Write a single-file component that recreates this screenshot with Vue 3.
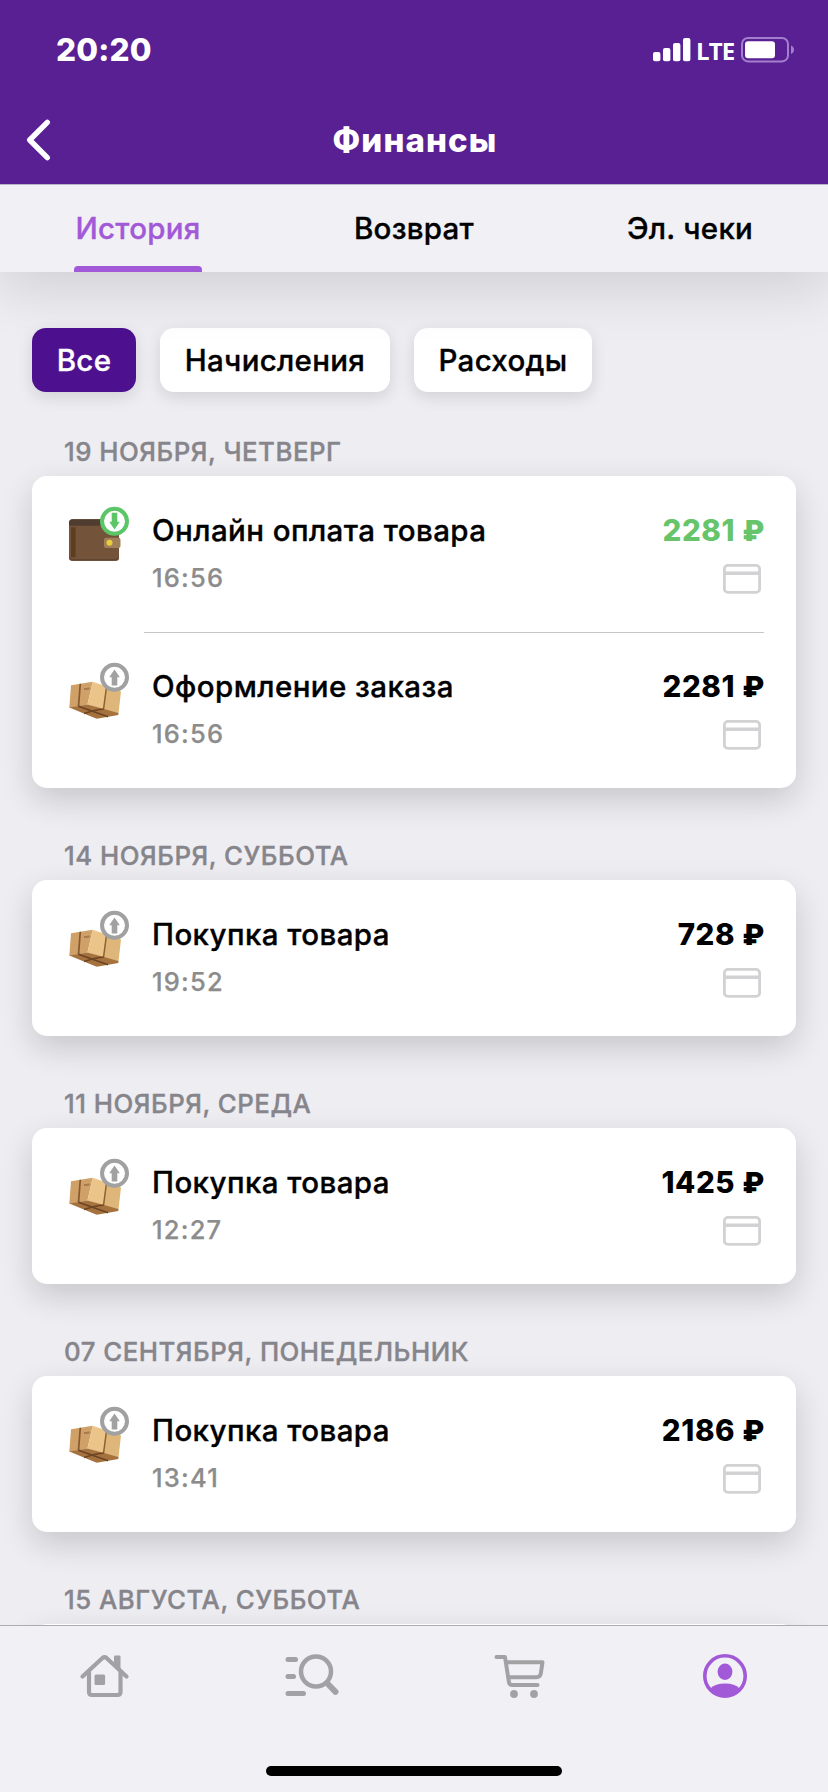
<script setup>
const tabs = [
  { label: 'История', active: true },
  { label: 'Возврат', active: false },
  { label: 'Эл. чеки', active: false },
]

const filters = [
  { label: 'Все', cls: 'w1', active: true },
  { label: 'Начисления', cls: 'w2', active: false },
  { label: 'Расходы', cls: 'w3', active: false },
]

const sections = [
  {
    date: '19 НОЯБРЯ, ЧЕТВЕРГ',
    rows: [
      { title: 'Онлайн оплата товара', time: '16:56', amount: '2281', income: true },
      { title: 'Оформление заказа', time: '16:56', amount: '2281', income: false },
    ],
  },
  { date: '14 НОЯБРЯ, СУББОТА', rows: [{ title: 'Покупка товара', time: '19:52', amount: '728', income: false }] },
  { date: '11 НОЯБРЯ, СРЕДА', rows: [{ title: 'Покупка товара', time: '12:27', amount: '1425', income: false }] },
  { date: '07 СЕНТЯБРЯ, ПОНЕДЕЛЬНИК', rows: [{ title: 'Покупка товара', time: '13:41', amount: '2186', income: false }] },
  { date: '15 АВГУСТА, СУББОТА', rows: [{ title: '', time: '', amount: '', income: false, blank: true }] },
]
</script>

<template>
  <div class="screen">
    <header class="header">
      <div class="status">
        <span class="clock">20:20</span>
        <div class="indicators">
          <svg class="signal" width="38" height="24" viewBox="0 0 38 24" fill="#fff">
            <rect x="0" y="14" width="7.4" height="9.3" rx="2" />
            <rect x="10" y="10" width="7.4" height="13.3" rx="2" />
            <rect x="20" y="5" width="7.4" height="18.3" rx="2" />
            <rect x="30" y="0" width="7.4" height="23.3" rx="2" />
          </svg>
          <span class="lte">LTE</span>
          <svg class="battery" width="54" height="26" viewBox="0 0 54 26">
            <rect x="1" y="1" width="46" height="23.4" rx="6" fill="none" stroke="#a47fcb" stroke-width="2" />
            <rect x="4" y="4.2" width="30" height="17" rx="3.2" fill="#fff" />
            <path d="M50 8.6c2 .8 3 2.300 3 4.200s-1 3.400-3 4.200z" fill="#a47fcb" />
          </svg>
        </div>
      </div>
      <div class="navbar">
        <svg class="back" width="28" height="44" viewBox="0 0 28 44" fill="none" stroke="#fff" stroke-width="5.400" stroke-linecap="round" stroke-linejoin="round">
          <path d="M23.300 4.300 5.700 22l17.600 17.600" />
        </svg>
        <h1 class="title">Финансы</h1>
      </div>
    </header>

    <nav class="tabs">
      <div v-for="tab in tabs" :key="tab.label" class="tab" :class="{ active: tab.active }">
        <span>{{ tab.label }}</span>
      </div>
    </nav>

    <main class="content">
      <div class="filters">
        <button v-for="f in filters" :key="f.label" class="chip" :class="[f.cls, { active: f.active }]">{{ f.label }}</button>
      </div>

      <section v-for="s in sections" :key="s.date" class="section">
        <h2 class="date">{{ s.date }}</h2>
        <div class="card">
          <article v-for="(r, i) in s.rows" :key="i" class="row">
            <template v-if="!r.blank">
              <svg class="kind" width="66" height="60" viewBox="0 0 66 60">
                <g v-if="r.income" transform="translate(0 .8)">
                  <rect x="5" y="14.500" width="50" height="41.500" rx="3.500" fill="#735339" />
                  <path d="M5 21v-3q0-3.500 3.500-3.500h30V21z" fill="#513d30" />
                  <path d="M7 22.500h4.500v30H7z" fill="#5d3d20" />
                  <path d="M5 52v.5q0 3.500 3.500 3.500h43q3.500 0 3.500-3.500V52q-1 2.300-3.500 2.300h-43Q6 54.300 5 52z" fill="#604630" />
                  <rect x="40" y="33" width="16.500" height="10.300" rx="2" fill="#a08058" />
                  <circle cx="45.500" cy="38" r="3" fill="#e8cf3a" />
                </g>
                <g v-else>
                  <path d="M7 25.200 28.700 21.800 23.500 44.500 5.300 48z" fill="#cfa067" />
                  <path d="M28.700 21.800 42.500 26.500 39.500 49.500 23.500 44.500z" fill="#ebc48a" />
                  <path d="M42.500 26.500 57 31.500 54.500 53.200 39.500 49.500z" fill="#dfb679" />
                  <path d="M5.300 47.500 23.500 44.500 54.500 53 54.300 55 32.700 58.800z" fill="#a5713d" />
                  <path d="M16.300 23.800 14.500 46.300" fill="none" stroke="#86582f" stroke-width="1.700" />
                  <path d="M42.500 27 39.500 49.300" fill="none" stroke="#8d6136" stroke-width="1.500" />
                  <path d="M14.500 46.300 44 56.800M39.500 49.300Q32 49.500 20 53.500" fill="none" stroke="#6b4424" stroke-width="1.500" />
                  <path d="m20 28.300 5.500-.8v2l-5.500.6z" fill="#a37a48" />
                </g>
                <circle cx="50.500" cy="17.300" r="12.500" fill="#fff" :stroke="r.income ? '#5bc567' : '#a1a1a1'" stroke-width="4" />
                <path v-if="r.income" d="M47.700 8.800h5.600v9h2.500l-5.300 7.700-5.300-7.700h2.500z" fill="#5bc567" />
                <path v-else d="M47.700 25.600h5.600v-8.400h2.500l-5.300-7.700-5.300 7.700h2.500z" fill="#a1a1a1" />
              </svg>
              <div class="info">
                <div class="name">{{ r.title }}</div>
                <div class="time">{{ r.time }}</div>
              </div>
              <div class="side">
                <div class="amount" :class="{ income: r.income }">{{ r.amount }} <span class="currency">₽</span></div>
                <svg class="pay" width="38" height="30" viewBox="0 0 38 30" fill="none" stroke="#d2d2d4" stroke-width="2.800">
                  <rect x="1.400" y="1.400" width="35.200" height="27" rx="3.500" />
                  <path d="M2 9.200h34.500" stroke-width="3.400" />
                </svg>
              </div>
            </template>
          </article>
        </div>
      </section>
    </main>

    <footer class="bottom">
      <div class="items">
        <div class="item">
          <svg width="52" height="48" viewBox="0 0 52 48" fill="none" stroke="#a2a2a4" stroke-width="4.200" stroke-linecap="round" stroke-linejoin="round">
            <path d="M4.500 24.500 24.500 6q2-1.600 4 0l20 18.500" />
            <path d="M11 20v20q0 3 3 3h25.500q3 0 3-3V20" />
            <path d="M37 4.500h4.500v14L37 14z" fill="#a2a2a4" stroke-width="2" />
            <rect x="16.500" y="22.500" width="10.600" height="10.600" rx="1.500" fill="#a2a2a4" stroke="none" />
          </svg>
        </div>
        <div class="item">
          <svg width="56" height="48" viewBox="0 0 56 48" fill="none" stroke="#a2a2a4" stroke-width="4.500" stroke-linecap="round">
            <path d="M5 7.500h7.500M5 24.500h5.500M5 41.500h15.500" stroke-width="5" />
            <circle cx="33" cy="19.500" r="15" />
            <path d="m44.500 31.500 8 8.300" stroke-width="6" />
          </svg>
        </div>
        <div class="item">
          <svg width="54" height="48" viewBox="0 0 54 48" fill="none" stroke="#a2a2a4" stroke-width="4" stroke-linecap="round" stroke-linejoin="round">
            <path d="M5.500 5H14l4 25.500Q18.500 33 21 33h25.500" />
            <path d="M16 10.300h35.500L49.800 21.500q-.6 3.700-4.200 3.700H18.500" />
            <circle cx="23" cy="42" r="3.900" fill="#a2a2a4" stroke="none" />
            <circle cx="43" cy="42" r="3.900" fill="#a2a2a4" stroke="none" />
          </svg>
        </div>
        <div class="item">
          <svg width="46" height="48" viewBox="0 0 46 48">
            <circle cx="23" cy="24" r="20.200" fill="none" stroke="#a259d8" stroke-width="3.600" />
            <ellipse cx="23" cy="19.700" rx="7.400" ry="8.200" fill="#a259d8" />
            <path d="M8.500 36.500Q13 31.500 23 31.500t14.500 5Q32 44.500 23 45 14 44.500 8.500 36.500z" fill="#a259d8" />
          </svg>
        </div>
      </div>
      <div class="home-bar"></div>
    </footer>
  </div>
</template>

<style>
html,
body {
  margin: 0;
  background: #f1f0f5;
}
</style>

<style scoped>
.screen {
  width: 828px;
  height: 1792px;
  overflow: hidden;
  display: flex;
  flex-direction: column;
  background: #eeedf2;
  font-family: Inter, 'Liberation Sans', sans-serif;
  color: #000;
}
.header {
  flex: none;
  height: 184px;
  background: #592094;
  color: #fff;
  z-index: 2;
}
.status {
  height: 100px;
  box-sizing: border-box;
  padding: 0 33px 0 56px;
  display: flex;
  align-items: center;
  justify-content: space-between;
}
.clock {
  margin-top: -1px;
  font-size: 31.5px;
  font-weight: 800;
  letter-spacing: 0.2px;
}
.indicators {
  display: flex;
  align-items: center;
}
.lte {
  margin: 2px 8px 0 5px;
  font-family: 'Open Sans', sans-serif;
  font-size: 24px;
  line-height: 24px;
  font-weight: 700;
  letter-spacing: -0.9px;
  width: 37px;
}
.navbar {
  height: 84px;
  display: grid;
  grid-template-columns: 80px 1fr 80px;
  align-items: center;
}
.back {
  margin: -4px 0 0 24px;
}
.title {
  margin: -5px 0 0;
  padding-left: 2px;
  text-align: center;
  font-size: 33px;
  font-weight: 800;
  letter-spacing: 1.1px;
}
.tabs {
  flex: none;
  height: 88px;
  box-sizing: border-box;
  border-top: 1px solid #b9b3c6;
  display: grid;
  grid-template-columns: repeat(3, 1fr);
  background: #f1f0f5;
  box-shadow: 0 16px 56px rgba(0, 0, 0, 0.13);
  z-index: 1;
}
.tab {
  display: flex;
  justify-content: center;
  font-size: 29.5px;
  line-height: 86px;
  font-weight: 500;
  letter-spacing: 0.25px;
  -webkit-text-stroke: 0.35px currentColor;
}
.tab.active {
  color: #a259d8;
  width: 128px;
  justify-self: center;
  position: relative;
}
.tab.active::after {
  content: '';
  position: absolute;
  left: 0;
  right: 0;
  bottom: 0;
  height: 6px;
  border-radius: 4px 4px 0 0;
  background: #a259d8;
}
.content {
  flex: 1;
  min-height: 0;
  overflow: hidden;
  padding: 56px 32px 0;
}
.filters {
  display: flex;
  gap: 24px;
}
.chip {
  height: 64px;
  padding: 0;
  border: 0;
  border-radius: 14px;
  background: #fff;
  color: #000;
  font-family: inherit;
  font-size: 29.5px;
  font-weight: 500;
  letter-spacing: 0.3px;
  -webkit-text-stroke: 0.35px currentColor;
  box-shadow: 0 5px 16px rgba(0, 0, 0, 0.12);
}
.chip.active {
  background: #4d108f;
  color: #fff;
}
.w1 {
  width: 104px;
}
.w2 {
  width: 230px;
}
.w3 {
  width: 178px;
}
.section {
  padding-top: 40px;
}
.section + .section {
  padding-top: 48px;
}
.date {
  margin: 0;
  height: 44px;
  line-height: 40px;
  padding: 0 0 0 32px;
  font-size: 25.8px;
  font-weight: 500;
  letter-spacing: 0.5px;
  color: #86858b;
  -webkit-text-stroke: 0.35px currentColor;
}
.card {
  border-radius: 15px;
  background: #fff;
  box-shadow: 0 12px 32px rgba(0, 0, 0, 0.165);
}
.row {
  height: 156px;
  box-sizing: border-box;
  display: flex;
  padding: 28px 32px 0;
  position: relative;
}
.row + .row::before {
  content: '';
  position: absolute;
  left: 112px;
  right: 32px;
  top: 0;
  height: 1px;
  background: #c6c6c8;
}
.kind {
  flex: none;
}
.info {
  flex: 1;
  padding-left: 22px;
}
.name {
  font-size: 29.5px;
  line-height: 52px;
  font-weight: 500;
  letter-spacing: 0.42px;
  -webkit-text-stroke: 0.35px currentColor;
}
.time {
  padding-top: 1px;
  font-size: 25.5px;
  line-height: 42px;
  color: #8c8c8c;
  font-weight: 500;
  letter-spacing: 1.2px;
  -webkit-text-stroke: 0.25px currentColor;
}
.side {
  display: flex;
  flex-direction: column;
  align-items: flex-end;
}
.amount {
  font-size: 29.5px;
  line-height: 52px;
  font-weight: 800;
  letter-spacing: 0.6px;
}
.currency {
  font-size: 28px;
  font-weight: 900;
  letter-spacing: 0;
}
.amount.income {
  color: #66c46a;
}
.pay {
  margin: 7px 3px 0 0;
}
.bottom {
  flex: none;
  height: 167px;
  box-sizing: border-box;
  border-top: 1px solid #acacb0;
  background: #f1f0f5;
  z-index: 1;
}
.items {
  height: 140px;
  box-sizing: border-box;
  padding-top: 26px;
  display: grid;
  grid-template-columns: repeat(4, 1fr);
}
.item {
  display: flex;
  justify-content: center;
  align-items: flex-start;
}
.home-bar {
  width: 296px;
  height: 10px;
  margin: 0 auto;
  border-radius: 5px;
  background: #000;
}
</style>
